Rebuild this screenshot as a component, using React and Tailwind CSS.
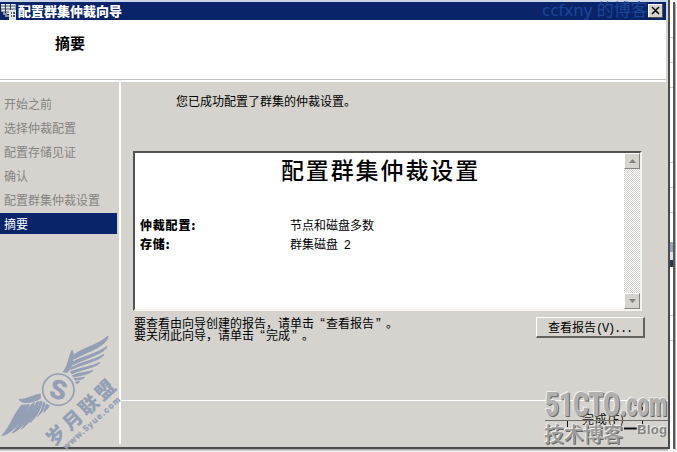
import React from 'react';

const STEPS = ['开始之前', '选择仲裁配置', '配置存储见证', '确认', '配置群集仲裁设置', '摘要'];

const CHECKER =
  'bg-[repeating-conic-gradient(#d2cfca_0%_25%,#ffffff_0%_50%)] bg-[length:2px_2px]';

function ServersIcon() {
  return (
    <svg className="h-[17px] w-[17px] shrink-0" viewBox="0 0 17 17" shapeRendering="crispEdges">
      <path d="M1 1h5v8H1zM6 1h5v10H6zM11 1h5v8h-5z" fill="#9aa0a0" />
      <path d="M1 1.5h4M6 1.5h4M11 1.5h4M1 4.5h4M6 4.5h4M11 4.5h4M2 7.5h3M6 7.5h4M5 10.5h4" stroke="#e4e8e8" />
      <path d="M3 9h4v3H3zM5 12h4v2H5z" fill="#8b9398" />
      <path d="M5.5 1v9M10.5 1v6" stroke="#223b67" />
      <path d="M9 7h7v10H9z" fill="#e4e6e2" />
      <path d="M11 9h4v5h-4z" fill="#44556a" />
      <path d="M12.5 9v5M11 11.5h4" stroke="#f6f6ee" />
    </svg>
  );
}

function TitleBar() {
  return (
    <div className="relative mt-[2px] flex h-[18px] w-[666px] items-center bg-[#0a246a] pr-[3px]">
      <ServersIcon />
      <span className="ml-px text-[13px] font-black leading-[18px] text-white">配置群集仲裁向导</span>
      <span className="absolute left-[542px] top-[-4px] whitespace-nowrap font-['Noto_Sans','Noto_Sans_CJK_SC',sans-serif] text-[17px] leading-[24px] text-[#1b4696]">
        ccfxny 的博客
      </span>
      <svg className="relative ml-auto h-[14px] w-[15px] bg-[#d6d3ce]" viewBox="0 0 15 14" shapeRendering="crispEdges">
        <path d="M0 .5h15M.5 0v14" stroke="#fff" />
        <path d="M0 13.5h15M14.5 0v14" stroke="#55554f" />
        <path d="M4 3l7 7M11 3l-7 7" stroke="#000" strokeWidth="1.6" shapeRendering="auto" />
      </svg>
    </div>
  );
}

function Sidebar() {
  return (
    <nav className="flex w-[119px] flex-col pt-[10px] text-[12px] text-[#85837f]">
      {STEPS.map((step, i) =>
        i === STEPS.length - 1 ? (
          <div key={step} className="mt-[1px] flex h-[21px] w-[117px] items-center bg-[#0a246a] pl-[4px] text-white">
            {step}
          </div>
        ) : (
          <div key={step} className="flex h-[24px] items-center pl-[4px]">{step}</div>
        ),
      )}
    </nav>
  );
}

function ScrollButton({ down }) {
  return (
    <div className="flex h-[16px] w-[16px] items-center justify-center border border-b-[#87847e] border-l-white border-r-[#87847e] border-t-white bg-[#d6d3ce]">
      <svg className="h-[4px] w-[7px]" viewBox="0 0 7 4">
        <path d={down ? 'M0 0h7L3.5 4z' : 'M0 4h7L3.5 0z'} fill="#85827c" />
      </svg>
    </div>
  );
}

function Report() {
  return (
    <section className="ml-[12px] mt-[38px] flex h-[160px] w-[509px] border-2 border-b-[#f4f3f0] border-l-[#55534f] border-r-[#f4f3f0] border-t-[#55534f] bg-white text-black">
      <div className="flex-1 pl-[5px]">
        <h1 className="mr-[3px] text-center text-[23px] font-medium leading-[33px] tracking-[1.9px]">配置群集仲裁设置</h1>
        <dl className="mt-[29px] grid grid-cols-[150px_1fr] text-[12px] leading-[19px]">
          <dt className="font-black tracking-[0.8px]">仲裁配置:</dt>
          <dd>节点和磁盘多数</dd>
          <dt className="font-black tracking-[0.8px]">存储:</dt>
          <dd>
            群集磁盘 <span className="ml-[3px] font-['Liberation_Mono',monospace]">2</span>
          </dd>
        </dl>
      </div>
      <div className={`flex w-[16px] flex-col justify-between ${CHECKER}`}>
        <ScrollButton />
        <ScrollButton down />
      </div>
    </section>
  );
}

function Content() {
  return (
    <main className="flex flex-1 flex-col text-[12px] text-black">
      <p className="ml-[55px] mt-[9px] h-[22px] leading-[19px]">您已成功配置了群集的仲裁设置。</p>
      <Report />
      <div className="flex h-[89px] items-start pl-[13px]">
        <p className="w-[402px] pt-[6px] leading-[12px]">
          要查看由向导创建的报告，请单击<Quoted>查看报告</Quoted>。
          <br />
          要关闭此向导，请单击<Quoted>完成</Quoted>。
        </p>
        <button className="mt-[6px] h-[21px] w-[109px] border border-b-2 border-r-2 border-b-[#65625e] border-l-white border-r-[#65625e] border-t-white bg-[#d6d3ce] text-[12px] leading-[18px]">
          查看报告<span className="font-['Liberation_Mono',monospace] text-[12px] tracking-[-1.2px]">(V)...</span>
        </button>
      </div>
      <div className="h-px bg-white" />
    </main>
  );
}

function Quoted({ children }) {
  return (
    <>
      <span className="inline-block w-[12px] pr-[1px] text-right font-['Liberation_Sans',sans-serif] text-[14px] leading-[12px]">“</span>
      {children}
      <span className="inline-block w-[12px] pl-[2px] font-['Liberation_Sans',sans-serif] text-[14px] leading-[12px]">”</span>
    </>
  );
}

function WingEmblem() {
  return (
    <svg className="absolute left-0 top-[320px] h-[132px] w-[140px]" viewBox="0 0 420 396" fill="#929fb5">
      <g stroke="#929fb5" strokeWidth="3" strokeLinejoin="round">
        <path d="M189 156C207 135 205 112 216 91C223 101 221 119 212 143L202 157Z" />
        <path d="M224 103C253 82 295 75 324 48C322 73 281 89 246 105L222 117Z" />
        <path d="M220 125C252 108 293 101 321 79C314 100 270 110 217 135Z" />
        <path d="M215 142C250 124 284 121 312 103C302 122 257 128 212 149Z" />
        <path d="M211 156C245 141 275 141 300 127C289 143 250 146 216 161Z" />
        <path d="M217 167C241 156 261 158 279 151C266 164 245 165 222 171Z" />
        <path d="M222 176L254 172C245 179 234 180 225 180Z" />
        <path d="M226 187L240 184L232 191Z" />
        <path d="M121 222C101 224 79 240 57 238C64 252 95 251 121 235Z" />
        <path d="M64 256C42 281 30 322 6 347C38 339 72 299 88 254Z" />
        <path d="M94 254C72 286 57 318 37 339C68 326 92 290 103 248Z" />
        <path d="M109 248C92 279 80 306 65 327C92 308 111 274 116 244Z" />
        <path d="M121 244C112 268 102 290 90 308C112 289 123 264 126 244Z" />
        <path d="M130 247C128 262 122 279 113 289C130 275 134 259 134 248Z" />
        <path d="M139 253L131 277C143 267 148 258 148 255Z" />
      </g>
      <circle cx="175" cy="209" r="54" fill="#d6d3ce" />
      <circle cx="175" cy="209" r="47" fill="none" stroke="#929fb5" strokeWidth="5" />
      <text x="175" y="237" textAnchor="middle" transform="rotate(14 175 209)" fontFamily="Roboto, sans-serif" fontWeight="900" fontSize="80">S</text>
      <text
        x="0" y="0" transform="translate(162 381) rotate(-43)" textLength="258"
        fontFamily="'Noto Sans CJK SC', sans-serif" fontWeight="900" fontSize="58"
      >
        岁月联盟
      </text>
      <text
        x="0" y="0" transform="translate(199 389) rotate(-42)" textLength="220"
        fontFamily="'Liberation Sans', sans-serif" fontWeight="700" fontSize="25" stroke="#929fb5" strokeWidth="1"
      >
        www.5yue.com
      </text>
    </svg>
  );
}

function StampTitle({ dx, fill }) {
  return (
    <g fill={fill} transform={`translate(${dx} ${dx})`} fontFamily="Roboto, sans-serif" fontWeight="900" fontSize="33">
      <text x="5" y="31" textLength="75" lengthAdjust="spacingAndGlyphs">51CTO</text>
      <text x="80" y="31" textLength="47" lengthAdjust="spacingAndGlyphs">.com</text>
    </g>
  );
}

function BlogStamp() {
  return (
    <svg className="absolute left-[540px] top-[385px] h-[62px] w-[130px]" viewBox="0 0 130 62">
      <path d="M27.5 22v21M102.5 22v21" stroke="#111" strokeDasharray="7 6" />
      <path d="M84 43.5h17" stroke="#111" strokeWidth="2" />
      <text x="42" y="39" fontFamily="'Noto Sans CJK SC', sans-serif" fontSize="12" fill="#111" textLength="42">完成(F)</text>
      <StampTitle dx={1} fill="#666563" />
      <StampTitle dx={-1} fill="#eeeeec" />
      <StampTitle dx={0} fill="#b1b0ae" />
      <path d="M5 35.5h123" stroke="#6f6e6b" />
      <g fontFamily="'Noto Sans CJK SC', sans-serif" fontWeight="500" fontSize="20">
        <text x="5" y="58" textLength="79" fill="#666563">技术博客</text>
        <text x="3" y="56" textLength="79" fill="#efeeec">技术博客</text>
        <text x="4" y="57" textLength="79" fill="#9b9a97">技术博客</text>
      </g>
      <g fontFamily="'Liberation Sans', sans-serif" fontWeight="700" fontSize="13">
        <text x="96" y="48" textLength="30" fill="#efeeec">Blog</text>
        <text x="97" y="49" textLength="30" fill="#868582">Blog</text>
      </g>
    </svg>
  );
}

function WindowEdge() {
  return (
    <aside className="flex h-[452px] w-[9px]">
      <div className="h-[449px] w-[2px] bg-[#4b4b4b]" />
      <div className="flex w-[3px] flex-col bg-white">
        <div className="mt-[37px] h-px bg-[#c9c9cc]" />
        <div className="mt-[24px] h-px bg-[#c9c9cc]" />
        <div className="mt-[24px] h-px bg-[#c9c9cc]" />
        <div className="mt-[74px] h-px bg-[#c9c9cc]" />
        <div className="mt-[24px] h-px bg-[#c9c9cc]" />
        <div className="mt-[24px] h-px bg-[#c9c9cc]" />
        <div className="mt-[29px] h-[10px] bg-[#8fa4c4]" />
        <div className="h-[8px] bg-[#e2e5ea]" />
        <div className="h-[7px] bg-[#243a5e]" />
        <div className="mt-[48px] h-px bg-[#c9c9cc]" />
        <div className="mt-[24px] h-px bg-[#c9c9cc]" />
      </div>
      <div className="mt-[2px] h-[447px] w-[2px] bg-[#575757]" />
      <div className="mt-[3px] h-[447px] w-[1px] bg-[#b0b0b0]" />
    </aside>
  );
}

export default function App() {
  return (
    <div className="relative flex h-[452px] w-[677px] overflow-hidden bg-white font-['Noto_Sans_CJK_SC',sans-serif]">
      <div className="flex w-[668px] flex-col bg-[#d6d3ce]">
        <div className="flex h-[20px] flex-col bg-[#cbd5ea]">
          <TitleBar />
        </div>
        <header className="h-[59px] w-[666px] bg-white pl-[55px] pt-[12px]">
          <h2 className="text-[15px] font-bold leading-[21px] text-black">摘要</h2>
        </header>
        <div className="h-[3px] w-[666px] border-t border-[#c4c2be] bg-white" />
        <div className="flex h-[362px]">
          <Sidebar />
          <div className="w-[2px] bg-white" />
          <Content />
        </div>
        <div className="h-[3px]" />
        <div className="h-[2px] bg-[#4b4b4b]" />
        <div className="h-[3px] bg-gradient-to-b from-[#a0a0a0] to-white" />
      </div>
      <WindowEdge />
      <WingEmblem />
      <BlogStamp />
    </div>
  );
}
